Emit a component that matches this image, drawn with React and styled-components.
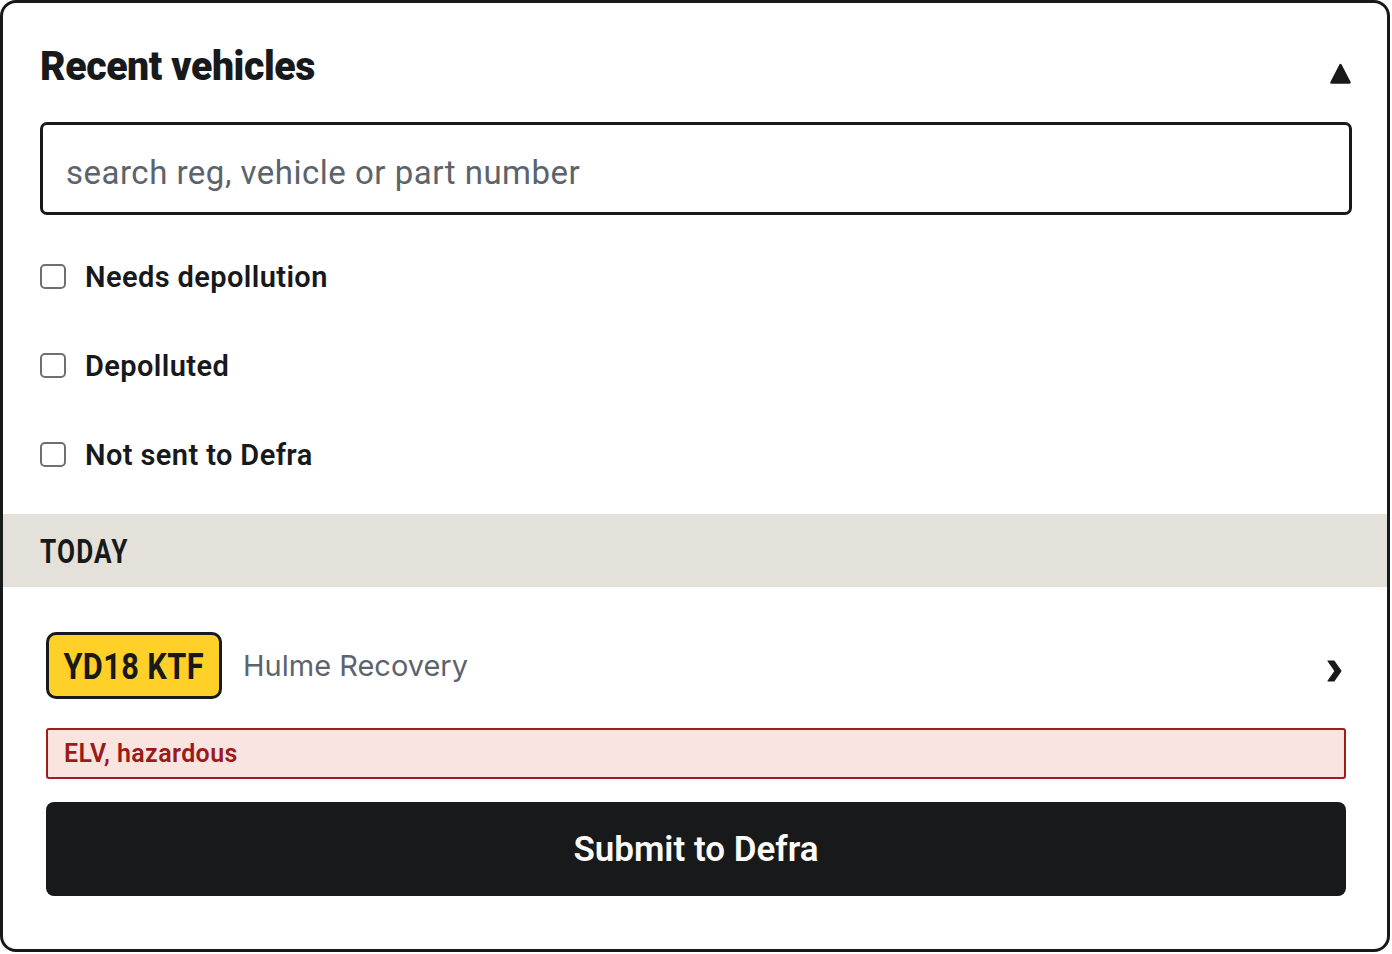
import React from "react";
import styled, { createGlobalStyle } from "styled-components";

const GlobalStyle = createGlobalStyle`
  html, body { margin: 0; padding: 0; background: #ffffff; }
  body { font-family: Roboto, "Liberation Sans", sans-serif; color: #18191b; }
  * { box-sizing: border-box; }
`;

const Card = styled.div`
  width: 1390px;
  height: 952px;
  border: 3px solid #18191b;
  border-radius: 16px;
  overflow: hidden;
  background: #ffffff;
  display: flex;
  flex-direction: column;
`;

const Header = styled.div`
  height: 119px;
  padding: 9px 36px 0 37px;
  display: flex;
  align-items: center;
  justify-content: space-between;
`;

const Title = styled.h1`
  margin: 0;
  display: inline-block;
  font-family: Roboto, "Liberation Sans", sans-serif;
  font-weight: 900;
  font-size: 40px;
  letter-spacing: -0.4px;
  line-height: 48px;
  color: #18191b;
  transform: scaleX(0.98);
  transform-origin: left center;
`;

const Toggle = styled.button`
  border: 0;
  background: none;
  padding: 0;
  margin-top: 12px;
  width: 21px;
  height: 21px;
  display: flex;
  cursor: pointer;
`;

const SearchWrap = styled.div`
  padding: 0 35px 0 37px;
`;

const SearchInput = styled.input`
  width: 100%;
  height: 93px;
  border: 3px solid #18191b;
  border-radius: 7px;
  padding: 7px 0 0 23px;
  font-family: Roboto, "Liberation Sans", sans-serif;
  font-size: 33px;
  letter-spacing: 0.5px;
  color: #18191b;
  outline: none;
  &::placeholder { color: #5c636b; }
`;

const Filters = styled.div`
  padding: 17px 37px 15px;
  display: flex;
  flex-direction: column;
`;

const FilterRow = styled.label`
  height: 89px;
  display: flex;
  align-items: center;
  gap: 19px;
  cursor: pointer;
`;

const Box = styled.span`
  width: 26px;
  height: 25px;
  border: 2px solid #6f6f6f;
  border-radius: 5px;
  background: #fff;
  flex: none;
`;

const FilterText = styled.span`
  font-family: Roboto, "Liberation Sans", sans-serif;
  font-weight: 600;
  font-size: 29px;
  letter-spacing: 0.4px;
  color: #18191b;
`;

const Band = styled.div`
  height: 73px;
  background: #e3e1d9;
  padding: 0 37px;
  display: flex;
  align-items: center;
`;

const BandTitle = styled.h2`
  margin: 0;
  display: inline-block;
  font-family: Roboto, "Liberation Sans", sans-serif;
  font-weight: 700;
  font-size: 34px;
  letter-spacing: 1.5px;
  color: #18191b;
  transform: scaleX(0.77);
  transform-origin: left center;
`;

const List = styled.div`
  padding: 45px 41px 0 43px;
  display: flex;
  flex-direction: column;
`;

const VehicleRow = styled.div`
  height: 67px;
  display: flex;
  align-items: center;
`;

const Plate = styled.div`
  width: 176px;
  height: 67px;
  border: 3px solid #18191b;
  border-radius: 10px;
  background: #ffd128;
  display: flex;
  align-items: center;
  justify-content: center;
  flex: none;
`;

const PlateText = styled.span`
  display: inline-block;
  white-space: nowrap;
  font-family: Roboto, "Liberation Sans", sans-serif;
  font-weight: 700;
  font-size: 37px;
  letter-spacing: 0.5px;
  color: #18191b;
  transform: scaleX(0.83);
  margin-top: 1px;
`;

const Owner = styled.span`
  margin-left: 21px;
  flex: 1;
  font-family: Inter, "Noto Sans", sans-serif;
  font-size: 29px;
  color: #5b646d;
`;

const Chevron = styled.span`
  margin-right: 4px;
  margin-top: 10px;
  display: flex;
`;

const Alert = styled.div`
  margin-top: 29px;
  height: 51px;
  border: 2px solid #a11c1c;
  border-radius: 3px;
  background: #fae4e0;
  padding: 0 16px;
  display: flex;
  align-items: center;
  font-family: Roboto, "Liberation Sans", sans-serif;
  font-weight: 600;
  font-size: 25px;
  letter-spacing: 0.4px;
  color: #9c1a1a;
`;

const SubmitButton = styled.button`
  margin-top: 23px;
  height: 94px;
  border: 0;
  border-radius: 8px;
  background: #18191b;
  color: #fbfaf6;
  font-family: Roboto, "Liberation Sans", sans-serif;
  font-weight: 600;
  font-size: 35px;
  cursor: pointer;
`;

const filters = ["Needs depollution", "Depolluted", "Not sent to Defra"];

export default function App() {
  return (
    <>
      <GlobalStyle />
      <Card>
        <Header>
          <Title>Recent vehicles</Title>
          <Toggle aria-label="Collapse">
            <svg width="21" height="21" viewBox="0 0 21 21">
              <polygon points="10.5,2 19.5,19.5 1.5,19.5" fill="#18191b" stroke="#18191b" strokeWidth="2.5" strokeLinejoin="round" />
            </svg>
          </Toggle>
        </Header>
        <SearchWrap>
          <SearchInput placeholder="search reg, vehicle or part number" />
        </SearchWrap>
        <Filters>
          {filters.map((f) => (
            <FilterRow key={f}>
              <Box />
              <FilterText>{f}</FilterText>
            </FilterRow>
          ))}
        </Filters>
        <Band>
          <BandTitle>TODAY</BandTitle>
        </Band>
        <List>
          <VehicleRow>
            <Plate>
              <PlateText>YD18 KTF</PlateText>
            </Plate>
            <Owner>Hulme Recovery</Owner>
            <Chevron>
              <svg width="15" height="22" viewBox="0 0 15 22">
                <polygon points="1,1 7,1 14,11 7,21 1,21 8,11" fill="#18191b" stroke="#18191b" strokeWidth="1.2" strokeLinejoin="round" />
              </svg>
            </Chevron>
          </VehicleRow>
          <Alert>ELV, hazardous</Alert>
          <SubmitButton>Submit to Defra</SubmitButton>
        </List>
      </Card>
    </>
  );
}
